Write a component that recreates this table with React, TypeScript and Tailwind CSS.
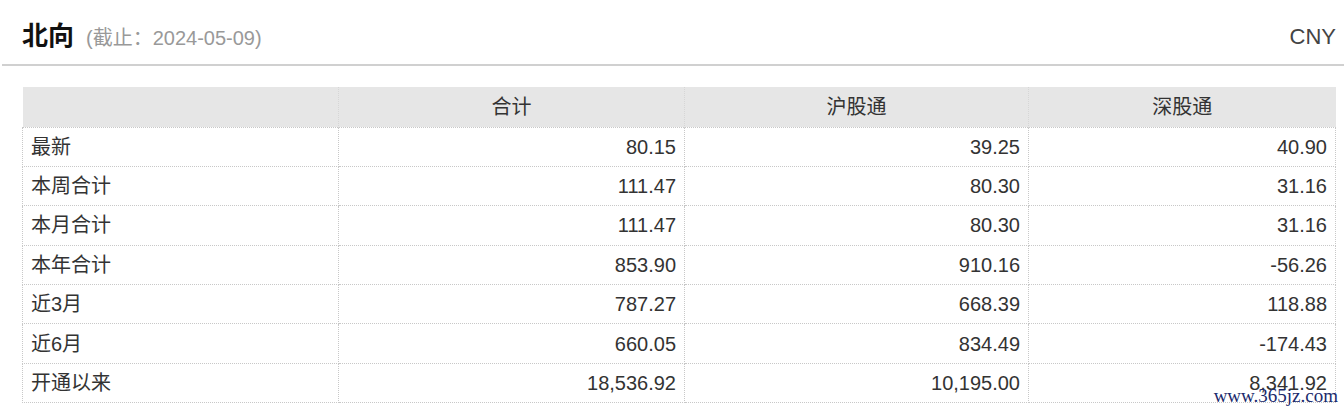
import { FC } from 'react';

interface Row {
  label: string;
  total: string;
  sh: string;
  sz: string;
}

const rows: Row[] = [
  { label: '最新', total: '80.15', sh: '39.25', sz: '40.90' },
  { label: '本周合计', total: '111.47', sh: '80.30', sz: '31.16' },
  { label: '本月合计', total: '111.47', sh: '80.30', sz: '31.16' },
  { label: '本年合计', total: '853.90', sh: '910.16', sz: '-56.26' },
  { label: '近3月', total: '787.27', sh: '668.39', sz: '118.88' },
  { label: '近6月', total: '660.05', sh: '834.49', sz: '-174.43' },
  { label: '开通以来', total: '18,536.92', sh: '10,195.00', sz: '8,341.92' },
];

const font = { fontFamily: '"Liberation Sans", Arial, "Noto Sans CJK SC", sans-serif' };

const App: FC = () => {
  return (
    <div className="w-[1344px] h-[412px] bg-white text-[#333] relative overflow-hidden" style={font}>
      <div className="ml-[2px] h-[66px] border-b-2 border-[#d0d0d0] flex items-center justify-between pl-5 pr-2 pt-[8px]">
        <div className="flex items-baseline">
          <span className="text-[26px] font-bold text-[#111]">北向</span>
          <span className="ml-3 text-[20px] text-[#999]">(截止：2024-05-09)</span>
        </div>
        <span className="text-[22px] text-[#444]">CNY</span>
      </div>
      <div className="pl-[22px] pr-[8px] pt-[21px]">
        <table className="w-full border-collapse text-[20px] text-[#333]">
          <colgroup>
            <col className="w-[316px]" />
            <col className="w-[346px]" />
            <col className="w-[344px]" />
            <col />
          </colgroup>
          <thead>
            <tr className="bg-[#e6e6e6] h-[40px]">
              <th className="font-normal border-r border-dotted border-[#d6d6d6]"></th>
              <th className="font-normal text-center border-r border-dotted border-[#d6d6d6]">合计</th>
              <th className="font-normal text-center border-r border-dotted border-[#d6d6d6]">沪股通</th>
              <th className="font-normal text-center">深股通</th>
            </tr>
          </thead>
          <tbody>
            {rows.map((r, i) => (
              <tr key={i} className="h-[39.4px]">
                <td className="px-2 text-left border border-dotted border-[#c8c8c8]">{r.label}</td>
                <td className="px-2 text-right border border-dotted border-[#c8c8c8]">{r.total}</td>
                <td className="px-2 text-right border border-dotted border-[#c8c8c8]">{r.sh}</td>
                <td className="px-2 text-right border border-dotted border-[#c8c8c8]">{r.sz}</td>
              </tr>
            ))}
          </tbody>
        </table>
      </div>
      <span
        className="absolute right-[6px] top-[386px] text-[19px] text-[#1a2a6c] leading-none"
        style={{ fontFamily: '"Liberation Serif", "DejaVu Serif", serif' }}
      >
        www.365jz.com
      </span>
    </div>
  );
};

export default App;
